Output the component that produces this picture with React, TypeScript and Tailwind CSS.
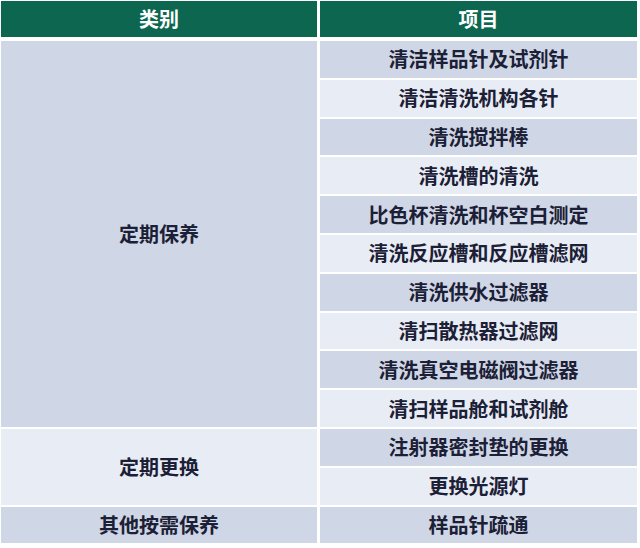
import React from 'react';

const items = [
  '清洁样品针及试剂针',
  '清洁清洗机构各针',
  '清洗搅拌棒',
  '清洗槽的清洗',
  '比色杯清洗和杯空白测定',
  '清洗反应槽和反应槽滤网',
  '清洗供水过滤器',
  '清扫散热器过滤网',
  '清洗真空电磁阀过滤器',
  '清扫样品舱和试剂舱',
  '注射器密封垫的更换',
  '更换光源灯',
  '样品针疏通',
];

const dark = 'bg-[#cfd6e5]';
const light = 'bg-[#e8ecf4]';

export default function App() {
  return (
    <div
      className="w-[640px] h-[548px] bg-white pl-[1px] pr-[3px] pt-[1px] text-[#1b2036]"
      style={{ fontFamily: '"Noto Sans CJK SC", "Noto Sans", sans-serif' }}
    >
      {/* header */}
      <div className="grid grid-cols-[316px_317px] gap-x-[3px] h-[36px]">
        <div className="bg-[#0c6650] flex items-center justify-center text-white font-bold text-[20px]">类别</div>
        <div className="bg-[#0c6650] flex items-center justify-center text-white font-bold text-[20px]">项目</div>
      </div>

      <div className="mt-[4px] grid grid-cols-[316px_317px] grid-rows-[repeat(13,36.8px)] gap-x-[3px] gap-y-[2px] text-[20px] font-bold leading-none">
        <div className={`${dark} row-start-1 row-span-10 col-start-1 flex items-center justify-center`}>定期保养</div>
        <div className={`${light} row-start-11 row-span-2 col-start-1 flex items-center justify-center`}>定期更换</div>
        <div className={`${dark} row-start-13 col-start-1 flex items-center justify-center`}>其他按需保养</div>
        {items.map((t, i) => (
          <div
            key={t}
            className={`${i % 2 === 0 ? dark : light} col-start-2 flex items-center justify-center`}
            style={{ gridRowStart: i + 1 }}
          >
            {t}
          </div>
        ))}
      </div>
    </div>
  );
}
